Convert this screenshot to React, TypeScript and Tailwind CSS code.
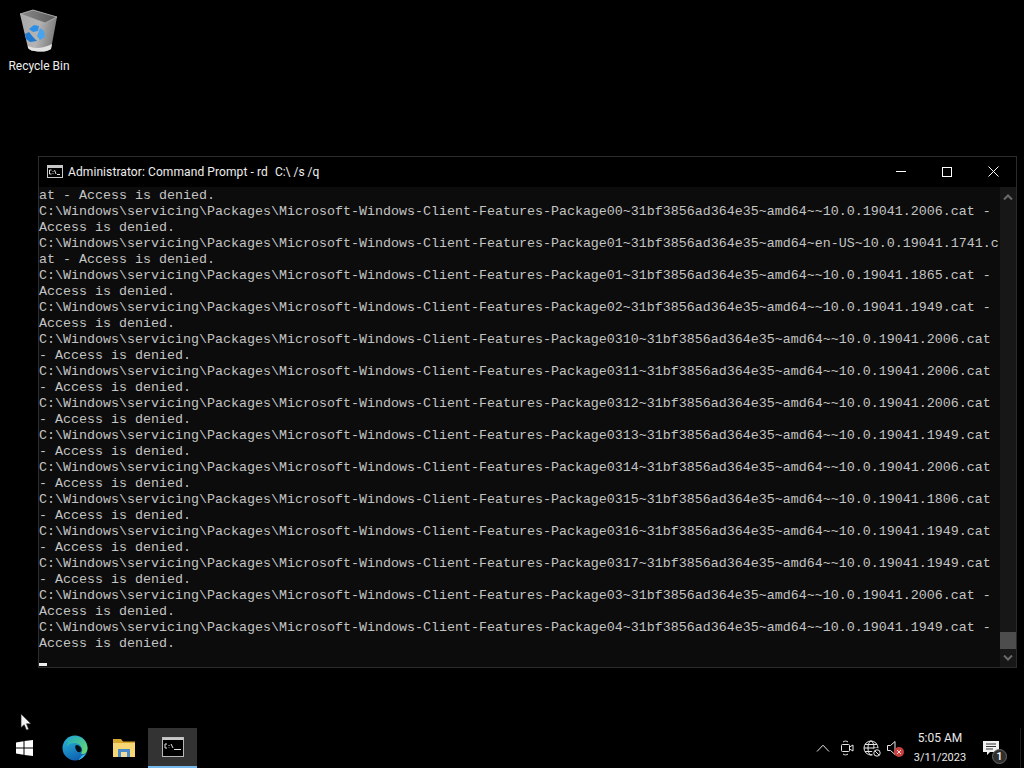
const lines = [
  "at - Access is denied.",
  "C:\\Windows\\servicing\\Packages\\Microsoft-Windows-Client-Features-Package00~31bf3856ad364e35~amd64~~10.0.19041.2006.cat -",
  "Access is denied.",
  "C:\\Windows\\servicing\\Packages\\Microsoft-Windows-Client-Features-Package01~31bf3856ad364e35~amd64~en-US~10.0.19041.1741.c",
  "at - Access is denied.",
  "C:\\Windows\\servicing\\Packages\\Microsoft-Windows-Client-Features-Package01~31bf3856ad364e35~amd64~~10.0.19041.1865.cat -",
  "Access is denied.",
  "C:\\Windows\\servicing\\Packages\\Microsoft-Windows-Client-Features-Package02~31bf3856ad364e35~amd64~~10.0.19041.1949.cat -",
  "Access is denied.",
  "C:\\Windows\\servicing\\Packages\\Microsoft-Windows-Client-Features-Package0310~31bf3856ad364e35~amd64~~10.0.19041.2006.cat",
  "- Access is denied.",
  "C:\\Windows\\servicing\\Packages\\Microsoft-Windows-Client-Features-Package0311~31bf3856ad364e35~amd64~~10.0.19041.2006.cat",
  "- Access is denied.",
  "C:\\Windows\\servicing\\Packages\\Microsoft-Windows-Client-Features-Package0312~31bf3856ad364e35~amd64~~10.0.19041.2006.cat",
  "- Access is denied.",
  "C:\\Windows\\servicing\\Packages\\Microsoft-Windows-Client-Features-Package0313~31bf3856ad364e35~amd64~~10.0.19041.1949.cat",
  "- Access is denied.",
  "C:\\Windows\\servicing\\Packages\\Microsoft-Windows-Client-Features-Package0314~31bf3856ad364e35~amd64~~10.0.19041.2006.cat",
  "- Access is denied.",
  "C:\\Windows\\servicing\\Packages\\Microsoft-Windows-Client-Features-Package0315~31bf3856ad364e35~amd64~~10.0.19041.1806.cat",
  "- Access is denied.",
  "C:\\Windows\\servicing\\Packages\\Microsoft-Windows-Client-Features-Package0316~31bf3856ad364e35~amd64~~10.0.19041.1949.cat",
  "- Access is denied.",
  "C:\\Windows\\servicing\\Packages\\Microsoft-Windows-Client-Features-Package0317~31bf3856ad364e35~amd64~~10.0.19041.1949.cat",
  "- Access is denied.",
  "C:\\Windows\\servicing\\Packages\\Microsoft-Windows-Client-Features-Package03~31bf3856ad364e35~amd64~~10.0.19041.2006.cat -",
  "Access is denied.",
  "C:\\Windows\\servicing\\Packages\\Microsoft-Windows-Client-Features-Package04~31bf3856ad364e35~amd64~~10.0.19041.1949.cat -",
  "Access is denied.",
];

function RecycleBin() {
  return (
    <svg width="42" height="44" viewBox="0 0 42 44">
      <defs>
        <linearGradient id="binBody" x1="0" y1="0" x2="1" y2="0.2">
          <stop offset="0" stopColor="#a8a8a8" />
          <stop offset="0.55" stopColor="#b4b4b4" />
          <stop offset="1" stopColor="#7e7e7e" />
        </linearGradient>
        <linearGradient id="binRim" x1="0" y1="0" x2="1" y2="0">
          <stop offset="0" stopColor="#8a8a8a" />
          <stop offset="1" stopColor="#5a5a5a" />
        </linearGradient>
      </defs>
      <path d="M2 5 L27 14 L39 8 L33 40 Q29 43 20 42.5 Q12 42 10 39 Z" fill="url(#binBody)" />
      <path d="M2 5 L15 1 L39 8 L27 14 Z" fill="url(#binRim)" stroke="#c4c4c4" strokeWidth="0.8" />
      <path d="M10 37 Q20 42 34 35 L33 40 Q29 43 20 42.5 Q12 42 10 39 Z" fill="#e2e2e2" />
      <path d="M11 20 L16 16 L21 17 L20 22 L15 23 Z" fill="#2e8fe6" />
      <path d="M7 25 L11 23 L15 28 L19 32 L12 33 L8 30 Z" fill="#1f7ad2" />
      <path d="M22 19 L26 22 L27 28 L22 31 L19 27 Z" fill="#48a4ee" />
    </svg>
  );
}

function TerminalIcon() {
  return (
    <svg width="16" height="13" viewBox="0 0 16 13">
      <rect x="0.5" y="0.5" width="15" height="12" fill="#000" stroke="#c8c8c8" />
      <rect x="0.5" y="0.5" width="15" height="2.5" fill="#c8c8c8" />
      <path d="M4.5 5 H2.5 V9 H4.5 M6 6 V6.8 M6 8.2 V9 M7.5 5 L9 9 M10 9.5 H13" stroke="#e0e0e0" strokeWidth="1" fill="none" />
    </svg>
  );
}

function EdgeIcon() {
  return (
    <svg width="26" height="26" viewBox="0 0 26 26">
      <defs>
        <linearGradient id="edgeBlue" x1="0.2" y1="0" x2="0.6" y2="1">
          <stop offset="0" stopColor="#2bb8d8" />
          <stop offset="1" stopColor="#0d5fb0" />
        </linearGradient>
        <linearGradient id="edgeGreen" x1="0" y1="0" x2="1" y2="1">
          <stop offset="0" stopColor="#1fa8c8" />
          <stop offset="1" stopColor="#6fdc6a" />
        </linearGradient>
      </defs>
      <circle cx="13" cy="13" r="12.5" fill="url(#edgeBlue)" />
      <path d="M6 4 C12 -1 25 1 25.5 13 C25.5 18 22 20 19 18.5 C22 15 19 8 13 8 C9 8 7 9 5 11 Z" fill="url(#edgeGreen)" />
      <path d="M14 10 C17 10 20 12.5 19.5 15.5 C18.5 18 15.5 17.5 14.5 15.5 C13.5 14 12.5 11.5 14 10 Z" fill="#020c14" />
      <path d="M20 20.5 C22 20 23.5 19 24.5 17.5 C23 21 20 24 16 25 C18 23.5 19 22 20 20.5 Z" fill="#3fb8e8" />
    </svg>
  );
}

function FolderIcon() {
  return (
    <svg width="22" height="20" viewBox="0 0 22 20">
      <path d="M0 1 H8 L10 3.5 H22 V19 H0 Z" fill="#d9a62f" />
      <rect x="0" y="5" width="22" height="14" fill="#f7d774" />
      <path d="M5 19 V11 H17 V19 H14 V14 H8 V19 Z" fill="#4a8ac9" />
      <rect x="8" y="14" width="6" height="5" fill="#f2dc9c" />
    </svg>
  );
}

function TrayIcons() {
  return (
    <>
      <div className="flex w-6 justify-center">
        <svg width="14" height="8" viewBox="0 0 14 8" fill="none" stroke="#e8e8e8" strokeWidth="1">
          <path d="M1 7.5 L7 1.2 L13 7.5" />
        </svg>
      </div>
      <div className="flex w-6 justify-center">
        <svg width="14" height="16" viewBox="0 0 14 16" fill="none" stroke="#e8e8e8" strokeWidth="1">
          <rect x="1.5" y="4.5" width="8" height="7" rx="1" />
          <path d="M9.5 7 L13 5 V11 L9.5 9" />
          <path d="M3 2 C4.5 0.8 6.5 0.8 8 2 M3 14 C4.5 15.2 6.5 15.2 8 14" />
        </svg>
      </div>
      <div className="relative flex w-6 justify-center">
        <svg width="16" height="16" viewBox="0 0 16 16" fill="none" stroke="#e8e8e8" strokeWidth="1">
          <circle cx="8" cy="8" r="7" />
          <ellipse cx="8" cy="8" rx="3" ry="7" />
          <path d="M1 8 H15 M2 4.5 H14 M2 11.5 H14" />
        </svg>
        <div className="absolute left-[13px] top-[8px] flex h-[9px] w-[9px] items-center justify-center rounded-full bg-black">
          <svg width="8" height="8" viewBox="0 0 8 8" fill="none" stroke="#e8e8e8" strokeWidth="1">
            <circle cx="4" cy="4" r="3.2" />
            <path d="M2 2 L6 6" />
          </svg>
        </div>
      </div>
      <div className="relative flex w-6 justify-center">
        <svg width="18" height="16" viewBox="0 0 18 16" fill="none" stroke="#e8e8e8" strokeWidth="1">
          <path d="M1.5 5.5 H4.5 L9 1.5 V14.5 L4.5 10.5 H1.5 Z" />
        </svg>
        <div className="absolute left-[11px] top-[7px] flex h-[10px] w-[10px] items-center justify-center rounded-full bg-[#c9403f]">
          <svg width="6" height="6" viewBox="0 0 6 6" stroke="#f5d5d5" strokeWidth="1">
            <path d="M1 1 L5 5 M5 1 L1 5" />
          </svg>
        </div>
      </div>
    </>
  );
}

export default function App() {
  return (
    <div className="relative flex h-screen w-[1024px] flex-col overflow-hidden bg-black" style={{ fontFamily: "Roboto, sans-serif" }}>
      {/* Desktop */}
      <div className="flex-1 px-[9px] pt-[9px]">
        <div className="flex w-[60px] flex-col items-center">
          <RecycleBin />
          <span className="mt-[5px] whitespace-nowrap text-[12px] leading-[16px] text-[#eeeeee]">Recycle Bin</span>
        </div>
      </div>

      {/* Console window */}
      <div className="absolute left-[38px] top-[156px] flex h-[512px] w-[979px] flex-col border border-[#2c2c2c] bg-black">
        <div className="flex h-[30px] shrink-0 items-center pb-[1px] pl-[8px]">
          <TerminalIcon />
          <span className="ml-[5px] whitespace-pre text-[12px] text-[#eeeeee]">
            <span className="tracking-[0.09px]">{"Administrator: Command Prompt - rd"}</span>
            <span className="ml-[7px]">{"C:\\ /s /q"}</span>
          </span>
          <div className="ml-auto flex h-full items-center">
            <div className="flex w-[46px] justify-center">
              <div className="h-px w-[10px] bg-white" />
            </div>
            <div className="flex w-[46px] justify-center">
              <div className="h-[10px] w-[10px] border border-white" />
            </div>
            <div className="flex w-[46px] justify-center">
              <svg width="11" height="11" viewBox="0 0 11 11" stroke="#fff" strokeWidth="1">
                <path d="M0.5 0.5 L10.5 10.5 M10.5 0.5 L0.5 10.5" />
              </svg>
            </div>
          </div>
        </div>
        <div className="flex min-h-0 flex-1 bg-[#0c0c0c]">
          <div className="min-w-0 flex-1 whitespace-pre pt-[1px] text-[13.333px] leading-[16px] text-[#c4c4c4]" style={{ fontFamily: "'Liberation Mono', monospace" }}>
            {lines.map((line, i) => (
              <div key={i} className="h-[16px]">{line}</div>
            ))}
            <div className="mt-[11px] h-[3px] w-[8px] bg-[#eeeeee]" />
          </div>
          <div className="flex w-[16px] shrink-0 flex-col items-center bg-[#171717]">
            <svg className="mt-[7px]" width="10" height="6" viewBox="0 0 10 6" fill="none" stroke="#6a6a6a" strokeWidth="2">
              <path d="M1 5.5 L5 1.5 L9 5.5" />
            </svg>
            <div className="mt-auto h-[17px] w-[16px] bg-[#4d4d4d]" />
            <svg className="my-[6px]" width="10" height="6" viewBox="0 0 10 6" fill="none" stroke="#6a6a6a" strokeWidth="2">
              <path d="M1 0.5 L5 4.5 L9 0.5" />
            </svg>
          </div>
        </div>
      </div>

      {/* Mouse pointer */}
      <svg className="absolute left-[20px] top-[713px]" width="12" height="18" viewBox="0 0 13 20">
        <path d="M1 1 V16 L4.5 13 L7 19 L9.5 18 L7 12 H12 Z" fill="#f2f2f2" stroke="#222" strokeWidth="0.6" />
      </svg>

      {/* Taskbar */}
      <div className="flex h-[40px] shrink-0 items-center bg-black">
        <div className="flex h-full w-[50px] items-center justify-center pr-[2px]">
          <svg width="17" height="16" viewBox="0 0 17 16" fill="#ffffff">
            <path d="M0 2.4 L7.5 1.3 V7.5 H0 Z M8.5 1.1 L17 0 V7.5 H8.5 Z M0 8.5 H7.5 V14.7 L0 13.6 Z M8.5 8.5 H17 V16 L8.5 14.9 Z" />
          </svg>
        </div>
        <div className="flex h-full w-[49px] items-center justify-center">
          <EdgeIcon />
        </div>
        <div className="flex h-full w-[49px] items-center justify-center">
          <FolderIcon />
        </div>
        <div className="flex h-full w-[49px] items-center justify-center border-b-2 border-[#76b9ed] bg-[#333333]">
          <svg width="22" height="20" viewBox="0 0 22 20">
            <rect x="0.5" y="0.5" width="21" height="19" fill="#000" stroke="#b8b8b8" />
            <rect x="0.5" y="0.5" width="21" height="2.5" fill="#c8c8c8" />
            <path d="M5 7 H3 V11 H5 M7 8 V9 M7 10.5 V11 M9 7 L11 11 M12 12.5 H19" stroke="#e0e0e0" strokeWidth="1" fill="none" />
          </svg>
        </div>
        <div className="ml-auto flex h-full items-center">
          <TrayIcons />
          <div className="flex w-[66px] flex-col items-center text-[#e8e8e8]">
            <span className="text-[12px] leading-[19px]">5:05 AM</span>
            <span className="text-[11px] leading-[19px]">3/11/2023</span>
          </div>
          <div className="relative flex h-full w-[36px] items-center justify-center">
            <svg width="16" height="16" viewBox="0 0 16 16">
              <path d="M0 1 H16 V12 H7 L4 15 V12 H0 Z" fill="#f0f0f0" />
              <path d="M3 4 H13 M3 6.5 H13 M3 9 H10" stroke="#333" strokeWidth="1" />
            </svg>
            <div className="absolute left-[19px] top-[21px] flex h-[15px] w-[15px] items-center justify-center rounded-full border border-[#666] bg-[#2e2e2e] text-[11px] font-semibold leading-none text-[#eeeeee]">1</div>
          </div>
          <div className="ml-[11px] h-full w-px bg-[#1d1d1d]" />
          <div className="w-[3px]" />
        </div>
      </div>
    </div>
  );
}
